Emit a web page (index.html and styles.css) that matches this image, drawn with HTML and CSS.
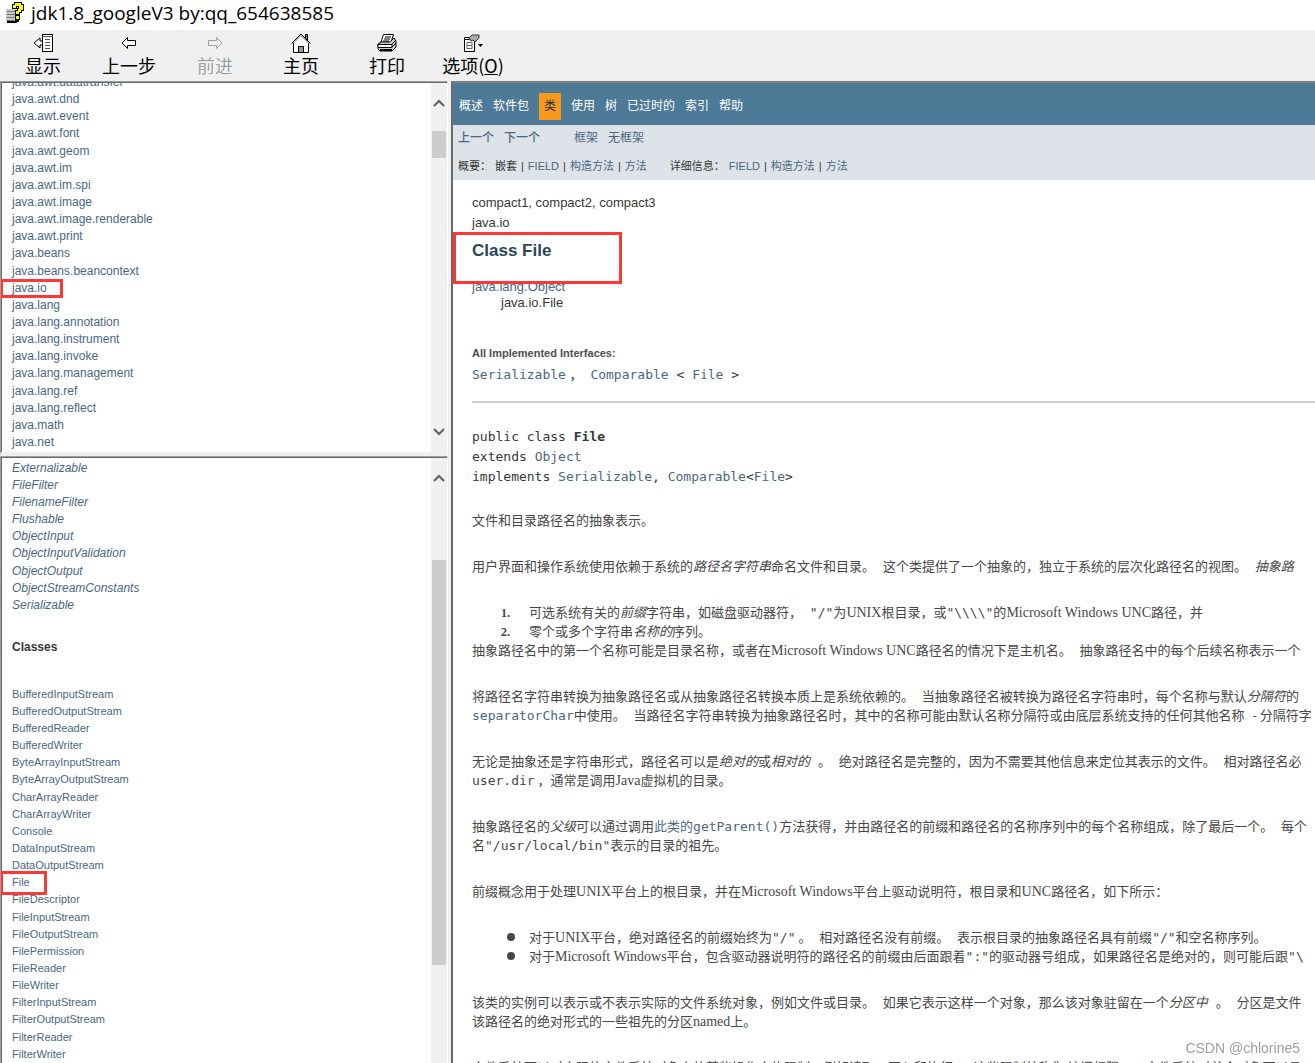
FILE: index.html
```html
<!DOCTYPE html>
<html lang="zh-CN">
<head>
<meta charset="utf-8">
<title>jdk1.8_googleV3 by:qq_654638585</title>
<link rel="stylesheet" href="styles.css">
</head>
<body>
<header class="titlebar">
  <svg class="app-icon" width="18" height="22" viewBox="0 0 18 22" shape-rendering="crispEdges" aria-hidden="true">
    <path d="M0 7h9v13H2v-1H0z" fill="#c8c8c8"/>
    <path d="M1 9h8M1 12h10M1 15h8M1 18h7" stroke="#777" stroke-width="1"/>
    <path d="M1 20h9v-1h2v-3" fill="none" stroke="#000" stroke-width="2"/>
    <path d="M6 2h2V0h7v2h2v6h-2v2h-2v2h-4V8h2V6h1V4h-2v2H6z" fill="#ff0" stroke="#000"/>
    <path d="M9 13h4v4H9z" fill="#ff0" stroke="#000"/>
  </svg>
  <h1 class="title">jdk1.8_googleV3 by:qq_654638585</h1>
</header>

<div class="toolbar" role="toolbar">
  <button class="tool" type="button">
    <svg width="20" height="18" viewBox="0 0 20 18" shape-rendering="crispEdges" aria-hidden="true">
      <path d="M7 4v3h3v4H7v3L1 9z" fill="#fff" stroke="#000" shape-rendering="auto"/>
      <path d="M9.500 .5h10v17h-10z" fill="#fff" stroke="#000"/>
      <path d="M9 2h11M12 5.500h5M12 8.500h5M12 11.500h5M12 14.500h5" stroke="#555"/>
    </svg>
    <span>显示</span>
  </button>
  <button class="tool" type="button">
    <svg width="16" height="18" viewBox="0 0 16 18" aria-hidden="true">
      <path d="M6.500 3.500v3h8v5h-8v3L1 9z" fill="#fff" stroke="#000"/>
    </svg>
    <span>上一步</span>
  </button>
  <button class="tool" type="button" disabled>
    <svg width="16" height="18" viewBox="0 0 16 18" aria-hidden="true">
      <path d="M9.500 3.500v3h-8v5h8v3L15 9z" fill="#f0f0f0" stroke="#a0a0a0"/>
    </svg>
    <span>前进</span>
  </button>
  <button class="tool" type="button">
    <svg width="20" height="20" viewBox="0 0 20 20" aria-hidden="true">
      <path d="M14.500 1.500v6h2v-6z" fill="#888" stroke="#000"/>
      <path d="M2.500 9.500v10h15v-10L10 2z" fill="#fff"/>
      <path d="M2.500 10v9.500h15V10" fill="none" stroke="#000"/>
      <path d="M.5 10.500L10 1l9.500 9.500" fill="none" stroke="#000" stroke-width="1"/>
      <path d="M2 10.500L10 2.500l8 8" fill="none" stroke="#777"/>
      <path d="M7.500 19.500v-6h5v6z" fill="#999" stroke="#000"/>
    </svg>
    <span>主页</span>
  </button>
  <button class="tool" type="button">
    <svg width="20" height="18" viewBox="0 0 20 18" aria-hidden="true">
      <path d="M6.500 .5h10l-3 9h-10z" fill="#fff" stroke="#000"/>
      <path d="M8 3h6M7 5h6M6 7h6" stroke="#000"/>
      <path d="M1 10l3-2h9l4-4 2 3v6l-4 4H3l-2-2z" fill="#ccc" stroke="#000"/>
      <path d="M1 10.500h14v3H1zM15 10l4-4M15 13l4-4" fill="#fff" stroke="#000"/>
      <path d="M3 16h12" stroke="#000" stroke-width="2"/>
    </svg>
    <span>打印</span>
  </button>
  <button class="tool" type="button">
    <svg width="20" height="18" viewBox="0 0 20 18" aria-hidden="true">
      <path d="M1.500 3.500h10v14h-10z" fill="#fff" stroke="#000"/>
      <path d="M2 5.500h9" stroke="#000"/>
      <path d="M4 8.500h5v6H4zM4 11.500h5" fill="none" stroke="#666"/>
      <path d="M6 4l3-3h7v3l-4 4-2-2-2 1z" fill="#aaa" stroke="#333"/>
      <path d="M15 10h5l-2.500 3z" fill="#000"/>
    </svg>
    <span>选项(<u>O</u>)</span>
  </button>
</div>

<div class="frames">
  <div class="side">
    <nav class="frame packages">
      <ul class="list">
        <li><a href="#">java.awt.datatransfer</a></li>
        <li><a href="#">java.awt.dnd</a></li>
        <li><a href="#">java.awt.event</a></li>
        <li><a href="#">java.awt.font</a></li>
        <li><a href="#">java.awt.geom</a></li>
        <li><a href="#">java.awt.im</a></li>
        <li><a href="#">java.awt.im.spi</a></li>
        <li><a href="#">java.awt.image</a></li>
        <li><a href="#">java.awt.image.renderable</a></li>
        <li><a href="#">java.awt.print</a></li>
        <li><a href="#">java.beans</a></li>
        <li><a href="#">java.beans.beancontext</a></li>
        <li class="marked marked-package"><a href="#">java.io</a></li>
        <li><a href="#">java.lang</a></li>
        <li><a href="#">java.lang.annotation</a></li>
        <li><a href="#">java.lang.instrument</a></li>
        <li><a href="#">java.lang.invoke</a></li>
        <li><a href="#">java.lang.management</a></li>
        <li><a href="#">java.lang.ref</a></li>
        <li><a href="#">java.lang.reflect</a></li>
        <li><a href="#">java.math</a></li>
        <li><a href="#">java.net</a></li>
      </ul>
      <div class="scrollbar" aria-hidden="true">
        <svg class="arrow" width="12" height="8" viewBox="0 0 12 8"><path d="M1 7l5-5 5 5" fill="none" stroke="#606060" stroke-width="2"/></svg>
        <div class="track track-packages"><div class="thumb"></div></div>
        <svg class="arrow" width="12" height="8" viewBox="0 0 12 8"><path d="M1 1l5 5 5-5" fill="none" stroke="#606060" stroke-width="2"/></svg>
      </div>
    </nav>
    <nav class="frame classes">
      <div class="class-lists">
        <ul class="list interfaces">
          <li><a href="#">Externalizable</a></li>
          <li><a href="#">FileFilter</a></li>
          <li><a href="#">FilenameFilter</a></li>
          <li><a href="#">Flushable</a></li>
          <li><a href="#">ObjectInput</a></li>
          <li><a href="#">ObjectInputValidation</a></li>
          <li><a href="#">ObjectOutput</a></li>
          <li><a href="#">ObjectStreamConstants</a></li>
          <li><a href="#">Serializable</a></li>
        </ul>
        <h2 class="list-title">Classes</h2>
        <ul class="list class-list">
          <li><a href="#">BufferedInputStream</a></li>
          <li><a href="#">BufferedOutputStream</a></li>
          <li><a href="#">BufferedReader</a></li>
          <li><a href="#">BufferedWriter</a></li>
          <li><a href="#">ByteArrayInputStream</a></li>
          <li><a href="#">ByteArrayOutputStream</a></li>
          <li><a href="#">CharArrayReader</a></li>
          <li><a href="#">CharArrayWriter</a></li>
          <li><a href="#">Console</a></li>
          <li><a href="#">DataInputStream</a></li>
          <li><a href="#">DataOutputStream</a></li>
          <li class="marked marked-class"><a href="#">File</a></li>
          <li><a href="#">FileDescriptor</a></li>
          <li><a href="#">FileInputStream</a></li>
          <li><a href="#">FileOutputStream</a></li>
          <li><a href="#">FilePermission</a></li>
          <li><a href="#">FileReader</a></li>
          <li><a href="#">FileWriter</a></li>
          <li><a href="#">FilterInputStream</a></li>
          <li><a href="#">FilterOutputStream</a></li>
          <li><a href="#">FilterReader</a></li>
          <li><a href="#">FilterWriter</a></li>
        </ul>
      </div>
      <div class="scrollbar" aria-hidden="true">
        <svg class="arrow" width="12" height="8" viewBox="0 0 12 8"><path d="M1 7l5-5 5 5" fill="none" stroke="#606060" stroke-width="2"/></svg>
        <div class="track track-classes"><div class="thumb"></div></div>
      </div>
    </nav>
  </div>

  <main class="doc">
    <nav class="topnav">
      <a href="#">概述</a><a href="#">软件包</a><a class="current" href="#">类</a><a href="#">使用</a><a href="#">树</a><a href="#">已过时的</a><a href="#">索引</a><a href="#">帮助</a>
    </nav>
    <div class="subnav">
      <div class="subrow">
        <div class="group"><a class="strong" href="#">上一个</a><a class="strong" href="#">下一个</a></div>
        <div class="group"><a href="#">框架</a><a href="#">无框架</a></div>
      </div>
      <div class="subrow details">
        <div class="links"><span>概要：</span><span>嵌套</span><i>|</i><a href="#">FIELD</a><i>|</i><a href="#">构造方法</a><i>|</i><a href="#">方法</a></div>
        <div class="links"><span>详细信息：</span><a href="#">FIELD</a><i>|</i><a href="#">构造方法</a><i>|</i><a href="#">方法</a></div>
      </div>
    </div>

    <article class="content">
      <div class="profiles">compact1, compact2, compact3</div>
      <div class="package">java.io</div>
      <h2 class="class-name marked">Class File</h2>
      <ul class="inheritance">
        <li><a href="#">java.lang.Object</a></li>
        <li class="sub">java.io.File</li>
      </ul>
      <h3 class="implements-title">All Implemented Interfaces:</h3>
      <p class="implements"><code><a href="#">Serializable</a></code> ，<code> <a href="#">Comparable</a> &lt; <a href="#">File</a> &gt;</code></p>
      <hr>
<pre class="signature">public class <b>File</b>
extends <a href="#">Object</a>
implements <a href="#">Serializable</a>, <a href="#">Comparable</a>&lt;<a href="#">File</a>&gt;</pre>

      <div class="prose">
        <p>文件和目录路径名的抽象表示。</p>
        <p>用户界面和操作系统使用依赖于系统的<em>路径名字符串</em>命名文件和目录。<code> </code>这个类提供了一个抽象的，独立于系统的层次化路径名的视图。<code> </code><em>抽象路</em></p>
        <div class="block">
          <ol>
            <li>可选系统有关的<em>前缀</em>字符串，如磁盘驱动器符，<code> "/"</code>为<span class="en">UNIX</span>根目录，或<code>"\\\\"</code>的<span class="en">Microsoft Windows UNC</span>路径，并</li>
            <li>零个或多个字符串<em>名称的</em>序列。</li>
          </ol>
          抽象路径名中的第一个名称可能是目录名称，或者在<span class="en">Microsoft Windows UNC</span>路径名的情况下是主机名。<code> </code>抽象路径名中的每个后续名称表示一个
        </div>
        <p>将路径名字符串转换为抽象路径名或从抽象路径名转换本质上是系统依赖的。<code> </code>当抽象路径名被转换为路径名字符串时，每个名称与默认<em>分隔符</em>的<br><code><a href="#">separatorChar</a></code>中使用。<code> </code>当路径名字符串转换为抽象路径名时，其中的名称可能由默认名称分隔符或由底层系统支持的任何其他名称<code> </code>- 分隔符字</p>
        <p>无论是抽象还是字符串形式，路径名可以是<em>绝对的</em>或<em>相对的</em><code> </code>。<code> </code>绝对路径名是完整的，因为不需要其他信息来定位其表示的文件。<code> </code>相对路径名必<br><code>user.dir</code> ，通常是调用<span class="en">Java</span>虚拟机的目录。</p>
        <p>抽象路径名的<em>父级</em>可以通过调用<a href="#">此类的<code>getParent()</code></a>方法获得，并由路径名的前缀和路径名的名称序列中的每个名称组成，除了最后一个。<code> </code>每个<br>名<code>"/usr/local/bin"</code>表示的目录的祖先。</p>
        <p>前缀概念用于处理<span class="en">UNIX</span>平台上的根目录，并在<span class="en">Microsoft Windows</span>平台上驱动说明符，根目录和<span class="en">UNC</span>路径名，如下所示：</p>
        <ul>
          <li>对于<span class="en">UNIX</span>平台，绝对路径名的前缀始终为<code>"/"</code> 。<code> </code>相对路径名没有前缀。<code> </code>表示根目录的抽象路径名具有前缀<code>"/"</code>和空名称序列。</li>
          <li>对于<span class="en">Microsoft Windows</span>平台，包含驱动器说明符的路径名的前缀由后面跟着<code>":"</code>的驱动器号组成，如果路径名是绝对的，则可能后跟<code>"\</code></li>
        </ul>
        <p>该类的实例可以表示或不表示实际的文件系统对象，例如文件或目录。<code> </code>如果它表示这样一个对象，那么该对象驻留在一个<em>分区中</em><code> </code>。<code> </code>分区是文件<br>该路径名的绝对形式的一些祖先的分区<span class="en">named</span>上。</p>
        <p>文件系统可以对实际的文件系统对象上的某些操作实施限制，例如读取，写入和执行。<code> </code>这些限制统称为<em>访问权限</em><code> </code>。<code> </code>文件系统对单个对象可以具</p>
      </div>
    </article>
  </main>
</div>
<div class="watermark">CSDN @chlorine5</div>
</body>
</html>
```

FILE: styles.css
```css
*,
::before,
::after {
  box-sizing: border-box;
}

body {
  margin: 0;
  height: 100vh;
  display: flex;
  flex-direction: column;
  overflow: hidden;
  background: #fff;
  color: #353833;
  font-family: "Liberation Sans", "Noto Sans CJK SC", sans-serif;
  font-size: 13px;
}

a {
  color: #4a6782;
  text-decoration: none;
}

ul,
ol {
  margin: 0;
  padding: 0;
  list-style: none;
}

/* Window title */
.titlebar {
  flex: none;
  display: flex;
  align-items: center;
  gap: 7px;
  height: 30px;
  padding: 0 6px 4px;
}

.title {
  margin: 0;
  color: #000;
  font: 19px/26px "Open Sans", "Noto Sans", sans-serif;
}

/* Toolbar */
.toolbar {
  flex: none;
  display: flex;
  height: 51px;
  background: #f0f0f0;
}

.tool {
  width: 86px;
  padding: 3px 0 0;
  display: flex;
  flex-direction: column;
  align-items: center;
  border: 0;
  background: none;
  color: #000;
  font: 18px/24px "Noto Sans CJK SC", sans-serif;
}

.tool svg {
  height: 20px;
}

.tool:disabled {
  color: #a0a0a0;
  text-shadow: 1px 1px #fff;
}

/* Frames */
.frames {
  flex: 1;
  min-height: 0;
  display: grid;
  grid-template-columns: 451px 1fr;
}

.side {
  min-height: 0;
  display: grid;
  grid-template-rows: 375fr 607fr;
  padding-right: 3px;
  background: #f0f0f0;
}

.frame {
  min-height: 0;
  display: grid;
  grid-template-columns: 1fr 16px;
  overflow: hidden;
  border: 1px solid #a0a0a0;
  border-right-color: #fff;
  border-bottom: 0;
  background: #fff;
  box-shadow: inset 1px 1px #696969;
}

.packages {
  border-bottom: 4px solid #f0f0f0;
}

.list {
  min-height: 0;
  padding-left: 11px;
  font-size: 12px;
  line-height: 17px;
}

.packages .list {
  display: flex;
  flex-direction: column;
  justify-content: flex-end;
  overflow: hidden;
  margin: 1px 0 0 -1px;
  padding: 0 0 1px 12px;
}

.packages li:nth-child(7n + 5),
.classes li:nth-child(7n) {
  margin-top: 1px;
}

.class-lists {
  padding-top: 3px;
}

.interfaces {
  font-style: italic;
}

.class-list {
  font-size: 11px;
}

.list-title {
  margin: 25px 0 30px;
  padding-left: 11px;
  font-size: 12px;
  line-height: 17px;
}

.scrollbar {
  display: flex;
  flex-direction: column;
  align-items: center;
  margin-top: 1px;
  padding: 16px 0;
  background: #f0f0f0;
}

.arrow {
  flex: none;
}

.track {
  flex: 1;
  width: 14px;
}

.track-packages {
  padding-top: 24px;
}

.track-classes {
  padding-top: 78px;
}

.thumb {
  height: 27px;
  background: #cdcdcd;
}

.track-classes .thumb {
  height: 405px;
}

/* Red highlight boxes laid over the text */
.marked {
  position: relative;
}

.marked::after {
  content: "";
  position: absolute;
  border: 3px solid #fd3636;
}

.marked-package::after {
  left: -12px;
  top: -1px;
  width: 63px;
  height: 19px;
}

.marked-class::after {
  left: -12px;
  top: -3px;
  width: 47px;
  height: 24px;
}

.class-name::after {
  left: -19px;
  top: -9px;
  width: 169px;
  height: 52px;
}

/* Documentation page */
.doc {
  min-width: 0;
  overflow: hidden;
  border: solid #696969;
  border-width: 2px 0 0 2px;
  border-top-color: #808080;
  white-space: nowrap;
}

.topnav {
  display: flex;
  align-items: center;
  gap: 10px;
  height: 42px;
  padding: 4px 6px 0;
  background: #4d7a97;
  font-size: 12px;
  line-height: 27px;
}

.topnav a {
  color: #fff;
}

.topnav .current {
  padding: 0 5px;
  background: #f8981d;
  color: #253441;
}

.subnav {
  height: 55px;
  padding: 4px 5px 0;
  background: #dee3e9;
  font-size: 12px;
  line-height: 18px;
}

.subrow {
  display: flex;
  gap: 34px;
}

.group {
  display: flex;
  gap: 10px;
}

.strong {
  font-weight: 500;
}

.details {
  gap: 23px;
  margin-top: 10px;
  font-size: 11px;
}

.links {
  display: flex;
  gap: 4px;
}

.links i {
  font-style: normal;
}

.content {
  padding-left: 19px;
}

.profiles,
.package {
  line-height: 20px;
}

.profiles {
  margin-top: 13px;
}

.class-name {
  margin: 8px 0 18px;
  color: #2c4557;
  font-size: 17px;
  line-height: 20px;
}

.inheritance {
  line-height: 16px;
}

.sub {
  padding-left: 29px;
}

.implements-title {
  margin: 34px 0 3px;
  color: #4e4e4e;
  font-size: 11px;
  line-height: 17px;
}

.implements {
  margin: 0;
  line-height: 20px;
}

hr {
  margin: 16px 0 24px;
  border: 0;
  border-top: 2px solid #d0d0d0;
}

code,
.signature {
  font-family: "DejaVu Sans Mono", "Noto Sans CJK SC", monospace;
  font-size: 13px;
  white-space: pre;
}

.signature {
  margin: 0;
  line-height: 20px;
}

.prose {
  padding-top: 23px;
  color: #474747;
  font-family: "Noto Sans CJK SC", sans-serif;
  line-height: 19px;
}

.prose > * {
  margin: 0 0 27px;
}

.prose code,
.en {
  line-height: 1;
}

.en {
  font-family: "Liberation Serif", serif;
  font-size: 14px;
}

.prose ol {
  counter-reset: item;
}

.prose ol li::before {
  counter-increment: item;
  content: counter(item) ".";
  display: inline-block;
  width: 38px;
  margin-right: 19px;
  font: bold 12px/1 "Liberation Serif", serif;
  text-align: right;
}

.prose ul li::before {
  content: "";
  display: inline-block;
  width: 8px;
  height: 8px;
  margin: 0 14px 1px 35px;
  border-radius: 50%;
  background: #474747;
}

.watermark {
  position: fixed;
  right: 15px;
  bottom: 6px;
  color: #a0a0a0;
  font-size: 14px;
  line-height: 18px;
  text-shadow: 1px 1px #fff;
}
```
